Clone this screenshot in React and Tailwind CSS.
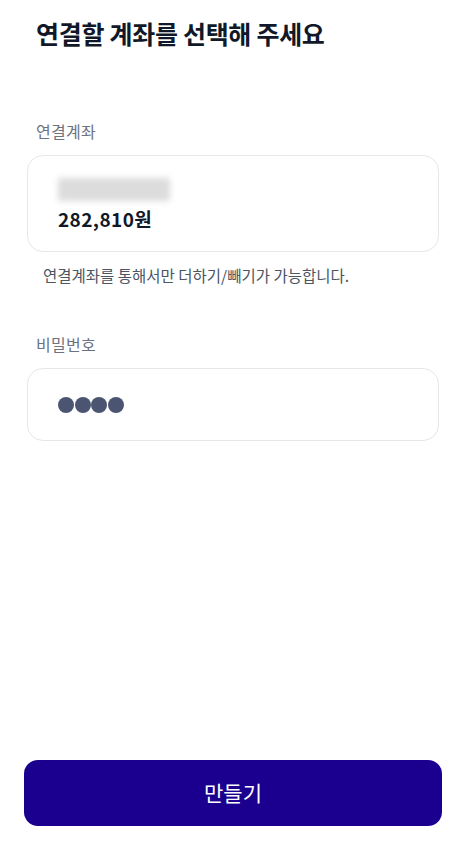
import React from 'react'

export default function App() {
  return (
    <div
      className="flex flex-col min-h-screen h-[843px] bg-white text-[#111827]"
      style={{ fontFamily: '"Noto Sans CJK KR", "Noto Sans", sans-serif' }}
    >
      {/* Title */}
      <h1 className="px-9 pt-[17px] text-[25px] leading-[32px] font-bold tracking-[-0.3px]">
        연결할 계좌를 선택해 주세요
      </h1>

      {/* Linked account */}
      <div className="mt-[70px] px-9 text-[16px] leading-[24px] text-[#6b7280] tracking-[0.3px]">연결계좌</div>
      <div className="mx-[27px] mt-3 h-[97px] rounded-2xl border border-[#e5e7eb] px-[30px] pt-[22px]">
        <div className="relative w-[112px] h-[23px]">
          <div className="absolute inset-0 bg-[#dcdcdc] blur-[3px]"></div>
        </div>
        <div className="mt-[6px] text-[19px] leading-[24px] font-bold tracking-[0.4px]">282,810원</div>
      </div>
      <p className="mt-[13px] px-[43px] text-[15.5px] leading-[20px] text-[#4b5563]">
        연결계좌를 통해서만 더하기/빼기가 가능합니다.
      </p>

      {/* Password */}
      <div className="mt-[47px] px-9 text-[16px] leading-[24px] text-[#6b7280] tracking-[0.3px]">비밀번호</div>
      <div className="mx-[27px] mt-3 h-[73px] rounded-2xl border border-[#e5e7eb] px-[30px] flex items-center">
        <div className="flex gap-[0.5px]">
          <span className="w-4 h-4 rounded-full bg-[#4b5571]"></span>
          <span className="w-4 h-4 rounded-full bg-[#4b5571]"></span>
          <span className="w-4 h-4 rounded-full bg-[#4b5571]"></span>
          <span className="w-4 h-4 rounded-full bg-[#4b5571]"></span>
        </div>
      </div>

      <div className="flex-1"></div>

      <button className="mx-6 mb-[17px] h-[66px] rounded-[14px] bg-[#1b008f] text-white text-[21px] font-normal">
        만들기
      </button>
    </div>
  )
}
